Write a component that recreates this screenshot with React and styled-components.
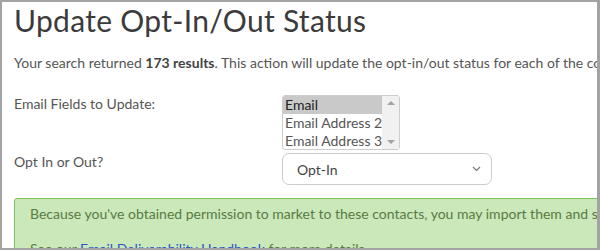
import React from "react";
import styled, { createGlobalStyle } from "styled-components";

const GlobalStyle = createGlobalStyle`
  html, body {
    margin: 0;
    padding: 0;
    background: #ffffff;
  }
  body {
    font-family: Lato, "Open Sans", sans-serif;
    color: #555;
  }
`;

const Frame = styled.div`
  width: 600px;
  height: 250px;
  box-sizing: border-box;
  border-style: solid;
  border-color: #a3a3a3;
  border-width: 2px 3px 2px 2px;
  overflow: hidden;
  background: #fff;
`;

const Content = styled.div`
  width: 660px;
  padding: 0 0 0 12px;
`;

const Title = styled.h1`
  margin: 0;
  padding-top: 1px;
  font-size: 30px;
  font-weight: 400;
  color: #3b3b3b;
  line-height: 34px;
  letter-spacing: 0.3px;
`;

const Intro = styled.p`
  margin: 17px 0 0;
  font-size: 14px;
  line-height: 18px;
  white-space: nowrap;
  color: #555;

  strong {
    font-weight: 700;
    color: #444;
  }
`;

const Form = styled.div`
  margin-top: 23px;
  display: grid;
  grid-template-columns: 268px auto;
  row-gap: 3px;
  align-items: start;
`;

const Label = styled.div`
  font-size: 14px;
  line-height: 18px;
  color: #555;
`;

const ListBox = styled.div`
  width: 118px;
  height: 55px;
  box-sizing: border-box;
  border: 1px solid #cdcdcd;
  border-radius: 3px;
  display: flex;
  overflow: hidden;
`;

const Options = styled.div`
  flex: 1;
  display: flex;
  flex-direction: column;
`;

const Option = styled.div`
  height: 18px;
  line-height: 18px;
  padding-left: 2px;
  font-size: 14px;
  white-space: nowrap;
  color: ${(p) => (p.$selected ? "#222" : "#555")};
  background: ${(p) => (p.$selected ? "#c9c9c9" : "transparent")};
`;

const Scrollbar = styled.div`
  width: 17px;
  background: #f1f1f1;
  display: flex;
  flex-direction: column;
  justify-content: space-between;
  align-items: center;
  padding: 5px 0;
  box-sizing: border-box;
`;

const Arrow = styled.div`
  width: 0;
  height: 0;
  border-left: 4px solid transparent;
  border-right: 4px solid transparent;
  ${(p) =>
    p.$down
      ? "border-top: 4px solid #a3a3a3;"
      : "border-bottom: 4px solid #a3a3a3;"}
`;

const Select = styled.div`
  width: 210px;
  height: 32px;
  box-sizing: border-box;
  border: 1px solid #cccccc;
  border-radius: 7px;
  display: flex;
  align-items: center;
  justify-content: space-between;
  padding: 0 10px 0 14px;
  font-size: 14px;
  color: #444;
`;

const Alert = styled.div`
  margin-top: 13px;
  border: 1px solid #7cc45a;
  border-radius: 3px;
  background: #cae8b9;
  padding: 6px 0 0 15px;
  color: #597a45;
  font-size: 14px;
  height: 80px;

  p {
    margin: 0 0 17px;
    line-height: 18px;
    white-space: nowrap;
  }

  a {
    color: #2a57c8;
    text-decoration: underline;
  }
`;

export default function App() {
  return (
    <>
      <GlobalStyle />
      <Frame>
        <Content>
          <Title>Update Opt-In/Out Status</Title>
          <Intro>
            Your search returned <strong>173 results</strong>. This action will
            update the opt-in/out status for each of the contacts.
          </Intro>
          <Form>
            <Label>Email Fields to Update:</Label>
            <ListBox>
              <Options>
                <Option $selected>Email</Option>
                <Option>Email Address 2</Option>
                <Option>Email Address 3</Option>
              </Options>
              <Scrollbar>
                <Arrow />
                <Arrow $down />
              </Scrollbar>
            </ListBox>
            <Label>Opt In or Out?</Label>
            <Select>
              <span>Opt-In</span>
              <svg width="9" height="6" viewBox="0 0 9 6">
                <path d="M1 1l3.5 3.5L8 1" fill="none" stroke="#777" strokeWidth="1.2" />
              </svg>
            </Select>
          </Form>
          <Alert>
            <p>
              Because you've obtained permission to market to these contacts,
              you may import them and send them emails.
            </p>
            <p>
              See our <a href="#">Email Deliverability Handbook</a> for more
              details.
            </p>
          </Alert>
        </Content>
      </Frame>
    </>
  );
}
